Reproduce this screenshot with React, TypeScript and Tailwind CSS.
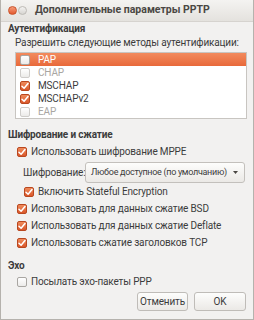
import React from "react";

const font = { fontFamily: 'Roboto, "Noto Sans", sans-serif' };

function Check({ checked, dim, size = 10 }: { checked: boolean; dim?: boolean; size?: number }) {
  if (checked) {
    return (
      <span className="flex items-center justify-center rounded-[2px] bg-gradient-to-b from-[#ef8a5a] to-[#d9572a] border border-[#b9471f] shrink-0" style={{ width: size, height: size }}>
        <svg width="8" height="8" viewBox="0 0 8 8">
          <path d="M1 4.2 L3.1 6.3 L7 1.5" fill="none" stroke="white" strokeWidth="1.5" strokeLinecap="round" strokeLinejoin="round" />
        </svg>
      </span>
    );
  }
  return (
    <span
      className={`rounded-[2px] border bg-gradient-to-b from-[#ffffff] to-[#ecebe9] shrink-0 ${dim ? "border-[#cfcdca]" : "border-[#a9a6a2]"}`}
      style={{ width: size, height: size }}
    />
  );
}

function Row({ checked, label, indent, mt }: { checked: boolean; label: string; indent: string; mt: string }) {
  return (
    <div className={`flex items-center h-[16px] gap-[4px] whitespace-nowrap ${indent} ${mt}`}>
      <Check checked={checked} />
      <span>{label}</span>
    </div>
  );
}

export default function App() {
  return (
    <div className="w-[254px] h-[320px] bg-[#f2f1f0] text-[#3c3c3c] text-[10px] tracking-[-0.15px] leading-none flex flex-col overflow-hidden border-x border-b border-[#b5b2ad]" style={font}>
      <div className="h-[22px] shrink-0 flex items-center bg-gradient-to-b from-[#f4f3f1] to-[#e4e2de] border-b border-[#d6d3cf] pl-[7px] whitespace-nowrap">
        <span className="w-[9px] h-[9px] rounded-full bg-gradient-to-b from-[#f59a78] to-[#e2582c] border border-[#c9532b]" />
        <span className="w-[9px] h-[9px] rounded-full bg-gradient-to-b from-[#f3f2f0] to-[#d7d5d1] border border-[#bdbab5] ml-[1px]" />
        <span className="ml-[8px] font-bold text-[#4a4743] text-[10.5px] tracking-[0px]">Дополнительные параметры PPTP</span>
      </div>
      <div className="flex flex-col pl-[6px] pr-[6px] whitespace-nowrap">
        <div className="font-bold h-[14px] flex items-center pl-[1px]">Аутентификация</div>
        <div className="pl-[8px] h-[14px] flex items-center">Разрешить следующие методы аутентификации:</div>
        <div className="ml-[8px] mt-[2px] h-[67px] bg-white border border-[#c8c5c1] flex flex-col">
          <div className="h-[13px] flex items-center gap-[8px] pl-[4px] bg-gradient-to-b from-[#f28a5d] to-[#e8693a] text-white">
            <Check checked={false} />
            <span>PAP</span>
          </div>
          {[
            { l: "CHAP", c: false, d: true },
            { l: "MSCHAP", c: true, d: false },
            { l: "MSCHAPv2", c: true, d: false },
            { l: "EAP", c: false, d: true },
          ].map((r) => (
            <div key={r.l} className={`h-[13px] flex items-center gap-[8px] pl-[4px] ${r.d ? "text-[#a9a6a2]" : "text-[#3c3c3c]"}`}>
              <Check checked={r.c} dim={r.d} />
              <span>{r.l}</span>
            </div>
          ))}
        </div>
        <div className="font-bold mt-[9px] h-[14px] flex items-center pl-[1px]">Шифрование и сжатие</div>
        <Row checked label="Использовать шифрование MPPE" indent="pl-[10px]" mt="mt-[2px]" />
        <div className="flex items-center mt-[2px] h-[21px] pl-[16px]">
          <span className="w-[62px] shrink-0">Шифрование:</span>
          <div className="w-[160px] shrink-0 h-[21px] flex items-center justify-between rounded-[3px] border border-[#c3c0bc] bg-gradient-to-b from-[#fdfdfc] to-[#ebe9e6] pl-[5px] pr-[4px]">
            <span className="text-[9px] tracking-[-0.3px]">Любое доступное (по умолчанию)</span>
            <span className="flex items-center justify-center w-[9px] h-[13px] shrink-0">
              <svg width="5" height="3" viewBox="0 0 5 3"><path d="M0 0 H5 L2.5 3 Z" fill="#4a4743" /></svg>
            </span>
          </div>
        </div>
        <Row checked label="Включить Stateful Encryption" indent="pl-[17px]" mt="mt-[1px]" />
        <Row checked label="Использовать для данных сжатие BSD" indent="pl-[10px]" mt="mt-[1px]" />
        <Row checked label="Использовать для данных сжатие Deflate" indent="pl-[10px]" mt="mt-[1px]" />
        <Row checked label="Использовать сжатие заголовков TCP" indent="pl-[10px]" mt="mt-[1px]" />
        <div className="font-bold mt-[8px] h-[14px] flex items-center pl-[1px]">Эхо</div>
        <Row checked={false} label="Посылать эхо-пакеты PPP" indent="pl-[10px]" mt="mt-[1px]" />
        <div className="flex justify-end gap-[6px] mt-[2px] pr-[1px]">
          <button className="w-[51px] h-[19px] rounded-[3px] border border-[#bfbcb8] bg-gradient-to-b from-[#fdfdfc] to-[#ebe9e6] text-[#3c3c3c] text-[10px]">Отменить</button>
          <button className="w-[52px] h-[19px] rounded-[3px] border border-[#bfbcb8] bg-gradient-to-b from-[#fdfdfc] to-[#ebe9e6] text-[#3c3c3c] text-[10px]">OK</button>
        </div>
      </div>
    </div>
  );
}
